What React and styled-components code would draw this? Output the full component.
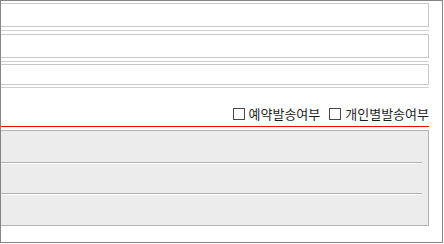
import React from "react";
import styled, { createGlobalStyle } from "styled-components";

const Global = createGlobalStyle`
  html, body { margin: 0; padding: 0; background: #fff; }
  body { font-family: "Noto Sans CJK KR", "Noto Sans", sans-serif; }
`;

const Frame = styled.div`
  box-sizing: border-box;
  width: 443px;
  height: 243px;
  border: 1px solid #858585;
  overflow: hidden;
  background: #fff;
`;

const Content = styled.div`
  width: 428px;
  display: flex;
  flex-direction: column;
`;

const FieldRow = styled.div`
  display: flex;
  padding: ${(p) => p.$pt}px 0 ${(p) => p.$pb}px;
  border-bottom: 1px solid #cfcfcf;
`;

const Field = styled.input`
  box-sizing: border-box;
  width: 100%;
  height: ${(p) => p.$h}px;
  border: 1px solid #c8c8c8;
  border-left: none;
  background: #fff;
  outline: none;
  padding: 0;
  margin: 0;
`;

const OptionBar = styled.div`
  display: flex;
  justify-content: flex-end;
  align-items: center;
  gap: 9px;
  padding: 19px 0 5px;
  border-bottom: 1px solid #ff0000;
`;

const Option = styled.label`
  display: flex;
  align-items: center;
  gap: 4px;
  height: 14px;
  font-size: 13px;
  line-height: 14px;
  color: #1e1e1e;
  white-space: nowrap;
`;

const Box = styled.input`
  appearance: none;
  box-sizing: border-box;
  width: 12px;
  height: 12px;
  margin: 0;
  border: 1px solid #4a4a4a;
  background: #fff;
`;

const Panel = styled.div`
  margin-top: 3px;
  box-sizing: border-box;
  background: #ececec;
  border: 1px solid #b2b2b2;
  border-left: none;
  display: flex;
  flex-direction: column;
`;

const PanelRow = styled.div`
  height: ${(p) => p.$h}px;
`;

const Rule = styled.hr`
  margin: 0 6px 0 0;
  height: 0;
  border: none;
  border-top: 1px solid #b0b0b0;
  border-bottom: 1px solid #ffffff;
`;

export default function App() {
  return (
    <>
      <Global />
      <Frame>
        <Content>
          <FieldRow $pt={2} $pb={3}>
            <Field $h={24} />
          </FieldRow>
          <FieldRow $pt={3} $pb={3}>
            <Field $h={24} />
          </FieldRow>
          <FieldRow $pt={2} $pb={2}>
            <Field $h={21} />
          </FieldRow>
          <OptionBar>
            <Option>
              <Box type="checkbox" />
              예약발송여부
            </Option>
            <Option>
              <Box type="checkbox" />
              개인별발송여부
            </Option>
          </OptionBar>
          <Panel>
            <PanelRow $h={31} />
            <Rule />
            <PanelRow $h={29} />
            <Rule />
            <PanelRow $h={30} />
          </Panel>
        </Content>
      </Frame>
    </>
  );
}
